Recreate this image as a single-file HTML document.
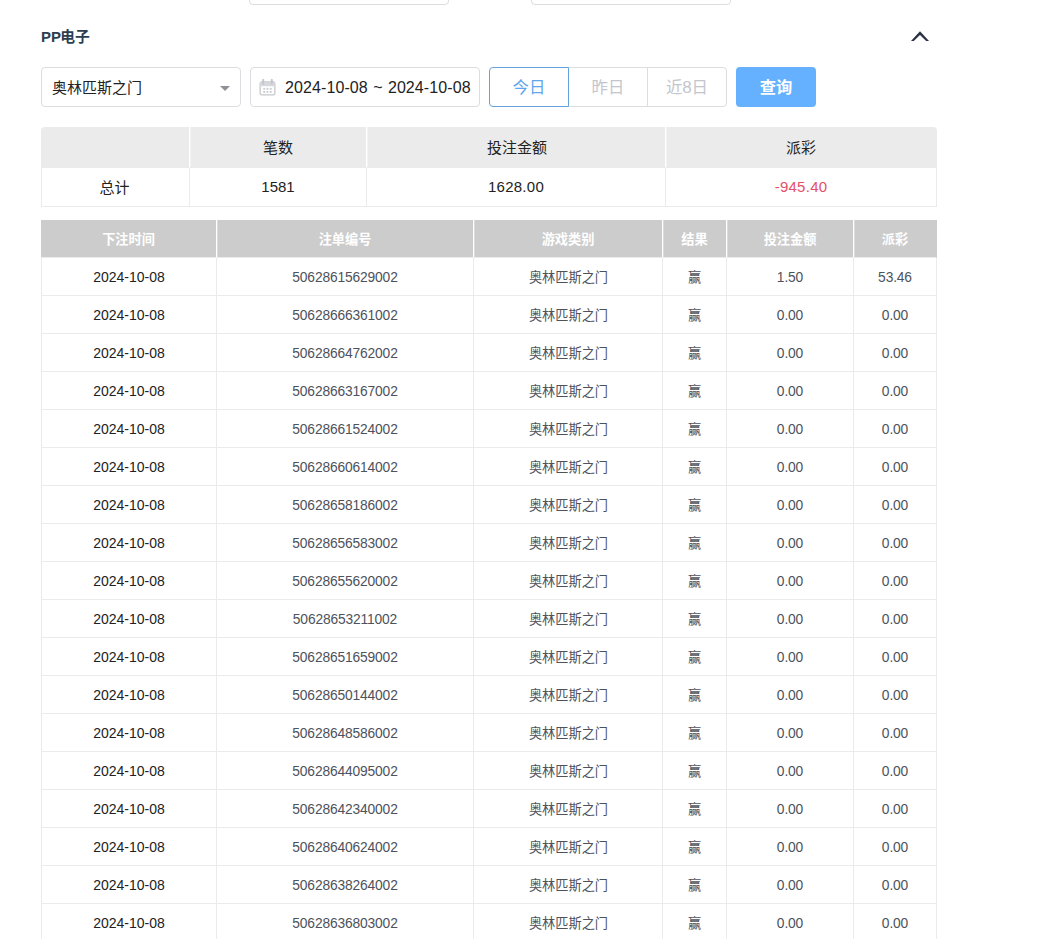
<!DOCTYPE html>
<html lang="zh-CN">
<head>
<meta charset="utf-8">
<title>PP电子</title>
<style>
html,body{margin:0;padding:0;background:#fff}
body{width:1057px;height:939px;overflow:hidden;font-family:"Liberation Sans","Noto Sans CJK SC",sans-serif;color:#222}
#app{position:relative;width:1057px;height:939px;overflow:hidden}
.k{display:inline-block;white-space:nowrap;line-height:1;letter-spacing:0;flex:none}
.stub{position:absolute;top:-35px;width:200px;height:40px;box-sizing:border-box;border:1px solid #dcdde1;border-radius:4px}
.title{position:absolute;left:41px;top:27.5px;height:20px;display:flex;align-items:center;font-size:14px;font-weight:bold;color:#2c3e50}
.title span.p{font-size:15px;letter-spacing:0;margin-right:-0.9px;position:relative;top:-0.8px}
.title .k{font-size:14.8px;font-weight:bold}
.chev{position:absolute;left:908px;top:28px}
.inp{position:absolute;top:67px;height:40px;box-sizing:border-box;border:1px solid #dcdde1;border-radius:4px;display:flex;align-items:center;background:#fff}
.sel{left:41px;width:200px;padding-left:10px;color:#222}
.sel .k{font-size:15px}
.caret{position:absolute;left:178px;top:18px}
.date{left:250px;width:230px;color:#222}
.cal{position:absolute;left:8px;top:11px}
.dt{position:absolute;left:34px;top:0;line-height:40px;font-size:16px;white-space:nowrap;letter-spacing:0.1px;word-spacing:0.75px}
.bg{position:absolute;left:489px;top:67px;height:40px;display:flex}
.b{width:80px;height:40px;box-sizing:border-box;border:1px solid #dcdde1;margin-right:-1px;display:flex;align-items:center;justify-content:center;color:#c3c6cc;font-size:16px;background:#fff}
.b .k{font-size:16.4px}
.b.on{border-color:#66a3dd;color:#5fa6ec;border-radius:4px 0 0 4px;position:relative;z-index:1}
.b:last-child{border-radius:0 4px 4px 0}
.q{position:absolute;left:736px;top:67px;width:80px;height:40px;border-radius:4px;background:#66b1ff;color:#fff;display:flex;align-items:center;justify-content:center}
.q .k{font-size:16.3px;font-weight:bold}
table{position:absolute;left:41px;width:896px;border-spacing:0;border-collapse:separate;table-layout:fixed}
th,td{padding:0;box-sizing:border-box;text-align:center;font-weight:normal;white-space:nowrap}
.sum{top:127px;font-size:15px;color:#222}
.sum th{height:41px;background:#ebebeb;border-right:1px solid #fff;border-bottom:1px solid #ebebeb}
.sum th:first-child{border-top-left-radius:4px}
.sum th:last-child{border-top-right-radius:4px;border-right-color:#ebebeb}
.sum td{height:39px;border-right:1px solid #ebebeb;border-bottom:1px solid #ebebeb}
.sum td:first-child{border-left:1px solid #ebebeb}
.sum .neg{color:#e4506a}
.sum td+td{padding-bottom:1px}
.sum td+td+td{letter-spacing:0.25px}
.sum td:first-child .k{position:relative;left:-1px}
.sum .k{font-size:15px}
.det{top:220px;font-size:13.8px;letter-spacing:-0.15px;color:#4d525b}
.det th{height:38px;background:#ccc;color:#fff;border-right:1px solid #fff;border-bottom:1px solid #ebebeb}
.det th+th{box-shadow:inset 1px 0 0 #dcdcdc}
.sum th+th{box-shadow:inset 1px 0 0 #f3f3f3}
.det th:last-child{border-right-color:#ccc}
.det td{height:38px;border-right:1px solid #ebebeb;border-bottom:1px solid #ebebeb}
.det td:first-child{border-left:1px solid #ebebeb}
.det td{padding-top:1px}
.det td.d{font-size:14px;letter-spacing:0;color:#222;padding-top:0}
.det .k{font-size:13.2px}
.det th .k{font-weight:bold}
.chev{left:908px;top:28px}
.det th .k{position:relative;top:0.5px}
.b .e{font-size:17px;position:relative;top:0.6px;margin:0 -0.2px}
.sum th:nth-child(3){padding-left:2px}
.det td:nth-child(3){padding-left:1px}
</style>
</head>
<body>
<div id="app">
<div class="stub" style="left:249px"></div><div class="stub" style="left:531px"></div>
<div class="title"><span class="p">PP</span><span class="k">电子</span></div>
<svg class="chev" width="24" height="16" viewBox="0 0 24 16" aria-hidden="true"><path d="M3 13L12 3.3L21 13H18.2L12 6.9L5.8 13Z" fill="#2b3246"/></svg>
<div class="inp sel"><span class="k">奥林匹斯之门</span><svg class="caret" width="10" height="5" viewBox="0 0 10 5" aria-hidden="true"><path d="M0 0H10L5 5Z" fill="#8f9196"/></svg></div>
<div class="inp date"><svg class="cal" width="17" height="17" viewBox="0 0 17 17" aria-hidden="true"><g fill="none" stroke="#c6c8cc" stroke-width="1.3"><rect x="1.15" y="2.9" width="14.7" height="12.9" rx="1.6"/></g><rect x="1.2" y="3" width="14.6" height="4.2" fill="#d6d8dc"/><path d="M4.2 0.9V4.6M12.8 0.9V4.6" stroke="#c2c4c9" stroke-width="1.9" stroke-linecap="round" fill="none"/><g fill="#c9ccd1"><rect x="4.3" y="8.9" width="1.9" height="1.8"/><rect x="7.55" y="8.9" width="1.9" height="1.8"/><rect x="10.8" y="8.9" width="1.9" height="1.8"/><rect x="4.3" y="12" width="1.9" height="1.8"/><rect x="7.55" y="12" width="1.9" height="1.8"/><rect x="10.8" y="12" width="1.9" height="1.8"/></g></svg><span class="dt">2024-10-08 ~ 2024-10-08</span></div>
<div class="bg"><div class="b on"><span class="k">今日</span></div><div class="b"><span class="k">昨日</span></div><div class="b"><span class="k">近</span><span class="e">8</span><span class="k">日</span></div></div>
<div class="q"><span class="k">查询</span></div>
<table class="sum"><colgroup><col style="width:149px"><col style="width:177px"><col style="width:299px"><col style="width:271px"></colgroup><thead><tr><th></th><th><span class="k">笔数</span></th><th><span class="k">投注金额</span></th><th><span class="k">派彩</span></th></tr></thead><tbody><tr><td><span class="k">总计</span></td><td>1581</td><td>1628.00</td><td class="neg">-945.40</td></tr></tbody></table>
<table class="det"><colgroup><col style="width:176px"><col style="width:257px"><col style="width:189px"><col style="width:64px"><col style="width:127px"><col style="width:83px"></colgroup><thead><tr><th><span class="k">下注时间</span></th><th><span class="k">注单编号</span></th><th><span class="k">游戏类别</span></th><th><span class="k">结果</span></th><th><span class="k">投注金额</span></th><th><span class="k">派彩</span></th></tr></thead><tbody>
<tr><td class="d">2024-10-08</td><td class="n">50628615629002</td><td><span class="k">奥林匹斯之门</span></td><td><span class="k">赢</span></td><td class="m">1.50</td><td class="m">53.46</td></tr>
<tr><td class="d">2024-10-08</td><td class="n">50628666361002</td><td><span class="k">奥林匹斯之门</span></td><td><span class="k">赢</span></td><td class="m">0.00</td><td class="m">0.00</td></tr>
<tr><td class="d">2024-10-08</td><td class="n">50628664762002</td><td><span class="k">奥林匹斯之门</span></td><td><span class="k">赢</span></td><td class="m">0.00</td><td class="m">0.00</td></tr>
<tr><td class="d">2024-10-08</td><td class="n">50628663167002</td><td><span class="k">奥林匹斯之门</span></td><td><span class="k">赢</span></td><td class="m">0.00</td><td class="m">0.00</td></tr>
<tr><td class="d">2024-10-08</td><td class="n">50628661524002</td><td><span class="k">奥林匹斯之门</span></td><td><span class="k">赢</span></td><td class="m">0.00</td><td class="m">0.00</td></tr>
<tr><td class="d">2024-10-08</td><td class="n">50628660614002</td><td><span class="k">奥林匹斯之门</span></td><td><span class="k">赢</span></td><td class="m">0.00</td><td class="m">0.00</td></tr>
<tr><td class="d">2024-10-08</td><td class="n">50628658186002</td><td><span class="k">奥林匹斯之门</span></td><td><span class="k">赢</span></td><td class="m">0.00</td><td class="m">0.00</td></tr>
<tr><td class="d">2024-10-08</td><td class="n">50628656583002</td><td><span class="k">奥林匹斯之门</span></td><td><span class="k">赢</span></td><td class="m">0.00</td><td class="m">0.00</td></tr>
<tr><td class="d">2024-10-08</td><td class="n">50628655620002</td><td><span class="k">奥林匹斯之门</span></td><td><span class="k">赢</span></td><td class="m">0.00</td><td class="m">0.00</td></tr>
<tr><td class="d">2024-10-08</td><td class="n">50628653211002</td><td><span class="k">奥林匹斯之门</span></td><td><span class="k">赢</span></td><td class="m">0.00</td><td class="m">0.00</td></tr>
<tr><td class="d">2024-10-08</td><td class="n">50628651659002</td><td><span class="k">奥林匹斯之门</span></td><td><span class="k">赢</span></td><td class="m">0.00</td><td class="m">0.00</td></tr>
<tr><td class="d">2024-10-08</td><td class="n">50628650144002</td><td><span class="k">奥林匹斯之门</span></td><td><span class="k">赢</span></td><td class="m">0.00</td><td class="m">0.00</td></tr>
<tr><td class="d">2024-10-08</td><td class="n">50628648586002</td><td><span class="k">奥林匹斯之门</span></td><td><span class="k">赢</span></td><td class="m">0.00</td><td class="m">0.00</td></tr>
<tr><td class="d">2024-10-08</td><td class="n">50628644095002</td><td><span class="k">奥林匹斯之门</span></td><td><span class="k">赢</span></td><td class="m">0.00</td><td class="m">0.00</td></tr>
<tr><td class="d">2024-10-08</td><td class="n">50628642340002</td><td><span class="k">奥林匹斯之门</span></td><td><span class="k">赢</span></td><td class="m">0.00</td><td class="m">0.00</td></tr>
<tr><td class="d">2024-10-08</td><td class="n">50628640624002</td><td><span class="k">奥林匹斯之门</span></td><td><span class="k">赢</span></td><td class="m">0.00</td><td class="m">0.00</td></tr>
<tr><td class="d">2024-10-08</td><td class="n">50628638264002</td><td><span class="k">奥林匹斯之门</span></td><td><span class="k">赢</span></td><td class="m">0.00</td><td class="m">0.00</td></tr>
<tr><td class="d">2024-10-08</td><td class="n">50628636803002</td><td><span class="k">奥林匹斯之门</span></td><td><span class="k">赢</span></td><td class="m">0.00</td><td class="m">0.00</td></tr>
</tbody></table>
</div>
</body>
</html>
